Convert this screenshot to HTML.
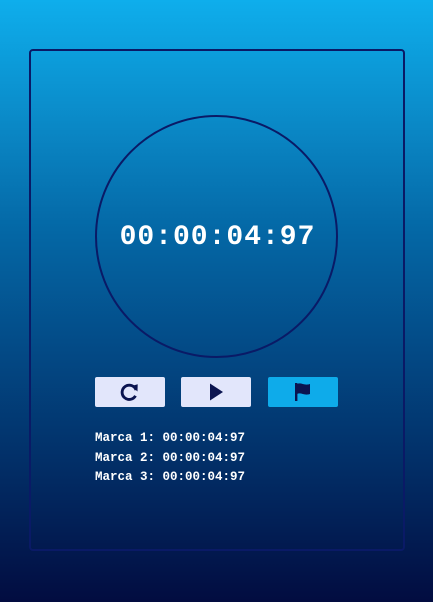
<!DOCTYPE html>
<html><head><style>
html,body{margin:0;padding:0;width:433px;height:602px;overflow:hidden}
body{background:linear-gradient(180deg,#0eaeec 0%,#0a86c4 22%,#0468a6 38%,#034a86 58%,#022a62 80%,#020c40 100%);font-family:"Liberation Mono",monospace;position:relative}
.box{position:absolute;left:29px;top:49px;width:372px;height:498px;border:2px solid #0a1a66;border-radius:4px}
.circle{position:absolute;left:95px;top:115px;width:239px;height:239px;border:2px solid #0a1a66;border-radius:50%}
.time{position:absolute;left:0;top:220px;width:433px;text-align:center;color:#fff;font-weight:bold;font-size:28px;letter-spacing:1px;line-height:36px;padding-left:1px}
.btn{position:absolute;top:377px;width:70px;height:30px;border-radius:2px;background:#e2e6fb;display:flex;align-items:center;justify-content:center}
.marks{position:absolute;left:95px;top:429px;color:#fff;font-weight:bold;font-size:12.5px;line-height:19.5px}
</style></head><body>
<div class="box"></div>
<div class="circle"></div>
<div class="time">00:00:04:97</div>
<div class="btn" style="left:95px"><svg width="22" height="22" viewBox="0 0 20 20"><path d="M15.5 8.2A6.5 6.5 0 1 0 15 13.5" fill="none" stroke="#0b1450" stroke-width="2.6"/><path d="M11.5 4.5L17 3L16.8 9.5Z" fill="#0b1450"/></svg></div>
<div class="btn" style="left:181px"><svg width="18" height="20" viewBox="0 0 18 20"><path d="M3 1.5L16 10L3 18.5Z" fill="#0b1450"/></svg></div>
<div class="btn" style="left:268px;background:#0eabea"><svg width="20" height="20" viewBox="0 0 20 20"><rect x="2" y="1" width="2.4" height="18" fill="#0b1450"/><path d="M4 2C8 0 11 4 17 2V12C11 14 8 10 4 12Z" fill="#0b1450"/></svg></div>
<div class="marks">Marca 1: 00:00:04:97<br>Marca 2: 00:00:04:97<br>Marca 3: 00:00:04:97</div>
</body></html>
